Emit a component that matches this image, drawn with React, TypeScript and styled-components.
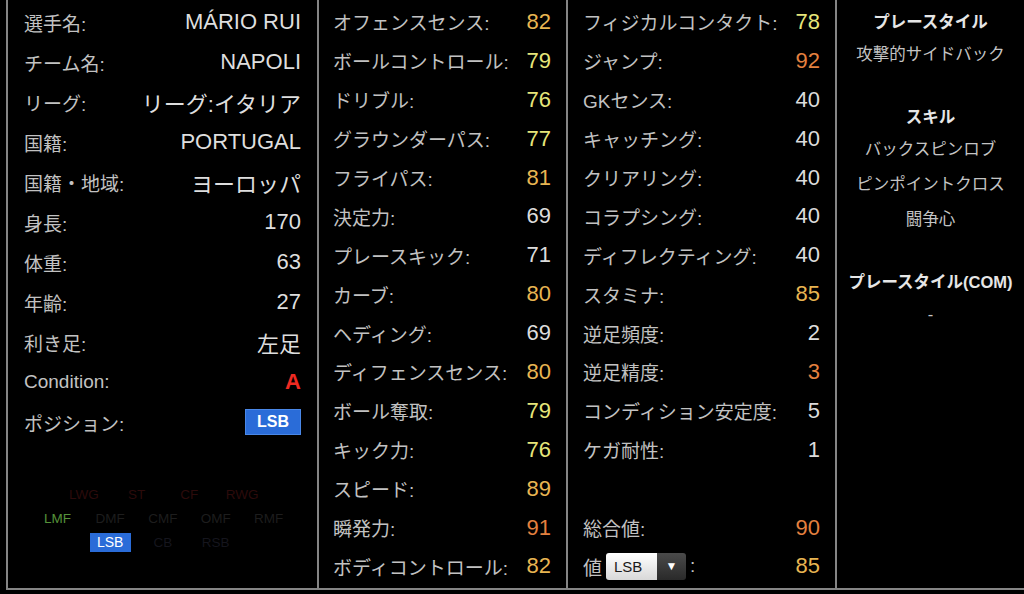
import React from "react";
import styled, { createGlobalStyle } from "styled-components";

const Global = createGlobalStyle`
  html, body { margin: 0; padding: 0; background: #000; }
  body { font-family: "Liberation Sans", "Noto Sans CJK JP", sans-serif; overflow: hidden; }
  #root { width: 1024px; height: 594px; background: #000; }
`;

const LINE = "#858585";

const Frame = styled.div`
  display: flex;
  margin-left: 6px;
  height: 590px;
  box-sizing: border-box;
  border-left: 2px solid ${LINE};
  border-bottom: 2px solid ${LINE};
`;

const Column = styled.div<{ $w: number; $padL: number; $padR: number; $padT: number }>`
  box-sizing: border-box;
  flex: 0 0 ${(p) => p.$w}px;
  width: ${(p) => p.$w}px;
  height: 100%;
  padding: ${(p) => p.$padT}px ${(p) => p.$padR}px 0 ${(p) => p.$padL}px;
  border-right: 2px solid ${LINE};
  display: flex;
  flex-direction: column;
`;

const SideColumn = styled.div`
  flex: 1 1 auto;
  padding-top: 7px;
  display: flex;
  flex-direction: column;
  align-items: center;
  text-align: center;
`;

const Row = styled.div<{ $h: number }>`
  height: ${(p) => p.$h}px;
  flex: 0 0 ${(p) => p.$h}px;
  display: flex;
  align-items: center;
  justify-content: space-between;
  white-space: nowrap;
`;

const Label = styled.span`
  font-size: 19px;
  color: #c2c2c2;
  display: flex;
  align-items: center;
`;

const Value = styled.span<{ $c?: string; $bold?: boolean }>`
  font-size: 22px;
  color: ${(p) => p.$c || "#dedede"};
  font-weight: ${(p) => (p.$bold ? 700 : 400)};
`;

const Badge = styled.span`
  display: inline-flex;
  align-items: center;
  justify-content: center;
  width: 56px;
  height: 26px;
  box-sizing: border-box;
  background: #2a6cd8;
  border: 1px solid #4a88e8;
  color: #fff;
  font-weight: 700;
  font-size: 16px;
`;

const PosMap = styled.div`
  margin-top: 40px;
  margin-left: 7px;
  display: grid;
  grid-template-columns: repeat(10, 26.4px);
  grid-auto-rows: 24px;
`;

const Pos = styled.span<{ $col: number; $row: number; $c: string }>`
  grid-column: ${(p) => p.$col} / span 2;
  grid-row: ${(p) => p.$row};
  display: flex;
  align-items: center;
  justify-content: center;
  font-size: 13.5px;
  color: ${(p) => p.$c};
`;

const PosBadge = styled.span`
  display: inline-flex;
  align-items: center;
  justify-content: center;
  width: 41px;
  height: 19px;
  background: #2a6cd8;
  color: #fff;
  font-size: 14px;
`;

const Select = styled.span`
  display: inline-flex;
  margin-left: 4px;
  width: 80px;
  height: 27px;
  border-radius: 3px;
  overflow: hidden;
`;

const SelectText = styled.span`
  flex: 1;
  display: flex;
  align-items: center;
  padding-left: 8px;
  background: linear-gradient(#ffffff, #d8d8d8);
  color: #1a1a1a;
  font-size: 15px;
`;

const SelectArrow = styled.span`
  width: 29px;
  display: flex;
  align-items: center;
  justify-content: center;
  background: linear-gradient(#4a4a4a, #2a2a2a);
  color: #fff;
  font-size: 12px;
`;

const Colon = styled.span`
  margin-left: 4px;
`;

const SideTitle = styled.div<{ $first?: boolean }>`
  margin-top: ${(p) => (p.$first ? 0 : 30)}px;
  line-height: 30px;
  font-size: 16.5px;
  font-weight: 700;
  color: #e6e6e6;
  white-space: nowrap;
`;

const SideItem = styled.div`
  line-height: 35px;
  font-size: 16.5px;
  color: #c4c4c4;
  white-space: nowrap;
`;

const WHITE = "#dcdcdc";
const YELLOW = "#e6e67a";
const GOLD = "#e8b552";
const ORANGE = "#e4803f";

const tier = (v: number) => (v >= 90 ? ORANGE : v >= 80 ? GOLD : v >= 75 ? YELLOW : WHITE);

const info: [string, React.ReactNode][] = [
  ["選手名:", <Value key="a">MÁRIO RUI</Value>],
  ["チーム名:", <Value key="b">NAPOLI</Value>],
  ["リーグ:", <Value key="c">リーグ:イタリア</Value>],
  ["国籍:", <Value key="d">PORTUGAL</Value>],
  ["国籍・地域:", <Value key="e">ヨーロッパ</Value>],
  ["身長:", <Value key="f">170</Value>],
  ["体重:", <Value key="g">63</Value>],
  ["年齢:", <Value key="h">27</Value>],
  ["利き足:", <Value key="i">左足</Value>],
  ["Condition:", <Value key="j" $c="#ee2a22" $bold>A</Value>],
  ["ポジション:", <Badge key="k">LSB</Badge>],
];

const col2: [string, number][] = [
  ["オフェンスセンス:", 82],
  ["ボールコントロール:", 79],
  ["ドリブル:", 76],
  ["グラウンダーパス:", 77],
  ["フライパス:", 81],
  ["決定力:", 69],
  ["プレースキック:", 71],
  ["カーブ:", 80],
  ["ヘディング:", 69],
  ["ディフェンスセンス:", 80],
  ["ボール奪取:", 79],
  ["キック力:", 76],
  ["スピード:", 89],
  ["瞬発力:", 91],
  ["ボディコントロール:", 82],
];

const col3: ([string, number, string?] | null)[] = [
  ["フィジカルコンタクト:", 78],
  ["ジャンプ:", 92],
  ["GKセンス:", 40],
  ["キャッチング:", 40],
  ["クリアリング:", 40],
  ["コラプシング:", 40],
  ["ディフレクティング:", 40],
  ["スタミナ:", 85],
  ["逆足頻度:", 2],
  ["逆足精度:", 3, ORANGE],
  ["コンディション安定度:", 5],
  ["ケガ耐性:", 1],
  null,
  ["総合値:", 90],
];

const RED = "#2c0b0b";
const GREY = "#1d1d1d";
const NAVY = "#15151d";

const positions: { t: string; col: number; row: number; c: string; badge?: boolean }[] = [
  { t: "LWG", col: 2, row: 1, c: RED },
  { t: "ST", col: 4, row: 1, c: RED },
  { t: "CF", col: 6, row: 1, c: RED },
  { t: "RWG", col: 8, row: 1, c: RED },
  { t: "LMF", col: 1, row: 2, c: "#55923a" },
  { t: "DMF", col: 3, row: 2, c: GREY },
  { t: "CMF", col: 5, row: 2, c: GREY },
  { t: "OMF", col: 7, row: 2, c: GREY },
  { t: "RMF", col: 9, row: 2, c: GREY },
  { t: "LSB", col: 3, row: 3, c: "#fff", badge: true },
  { t: "CB", col: 5, row: 3, c: NAVY },
  { t: "RSB", col: 7, row: 3, c: NAVY },
];

export default function App() {
  return (
    <>
      <Global />
      <Frame>
        <Column $w={311} $padL={16} $padR={16} $padT={2}>
          {info.map(([l, v]) => (
            <Row $h={40} key={l}>
              <Label>{l}</Label>
              {v}
            </Row>
          ))}
          <PosMap>
            {positions.map((p) => (
              <Pos key={p.t} $col={p.col} $row={p.row} $c={p.c}>
                {p.badge ? <PosBadge>{p.t}</PosBadge> : p.t}
              </Pos>
            ))}
          </PosMap>
        </Column>
        <Column $w={249} $padL={14} $padR={15} $padT={2.5}>
          {col2.map(([l, v]) => (
            <Row $h={38.9} key={l}>
              <Label>{l}</Label>
              <Value $c={tier(v)}>{v}</Value>
            </Row>
          ))}
        </Column>
        <Column $w={269} $padL={15} $padR={15} $padT={2.5}>
          {col3.map((r, i) =>
            r ? (
              <Row $h={38.9} key={r[0]}>
                <Label>{r[0]}</Label>
                <Value $c={r[2] || tier(r[1])}>{r[1]}</Value>
              </Row>
            ) : (
              <Row $h={38.9} key={"blank" + i} />
            )
          )}
          <Row $h={38.9}>
            <Label>
              値
              <Select>
                <SelectText>LSB</SelectText>
                <SelectArrow>▼</SelectArrow>
              </Select>
              <Colon>:</Colon>
            </Label>
            <Value $c={GOLD}>85</Value>
          </Row>
        </Column>
        <SideColumn>
          <SideTitle $first>プレースタイル</SideTitle>
          <SideItem>攻撃的サイドバック</SideItem>
          <SideTitle>スキル</SideTitle>
          <SideItem>バックスピンロブ</SideItem>
          <SideItem>ピンポイントクロス</SideItem>
          <SideItem>闘争心</SideItem>
          <SideTitle>プレースタイル(COM)</SideTitle>
          <SideItem>-</SideItem>
        </SideColumn>
      </Frame>
    </>
  );
}
